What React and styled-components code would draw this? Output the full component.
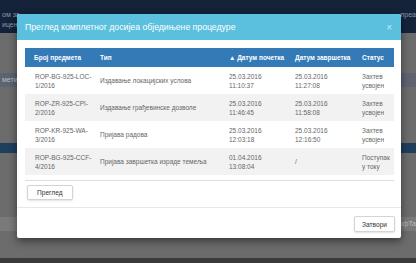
import styled, { createGlobalStyle } from "styled-components";

const Global = createGlobalStyle`
    html, body {
        margin: 0;
        padding: 0;
        width: 416px;
        height: 263px;
        overflow: hidden;
        font-family: "Liberation Sans", Arial, sans-serif;
    }
`

const columns = [
    { title: "Број предмета", width: 67, pad: 9 },
    { title: "Тип", width: 129, pad: 8 },
    { title: "▲ Датум почетка", width: 66, pad: 8 },
    { title: "Датум завршетка", width: 67, pad: 8 },
    { title: "Статус", width: 40, pad: 8 },
]

const rows = [
    { id: ["ROP-BG-925-LOC-", "1/2016"], type: ["Издавање локацијских услова"], start: ["25.03.2016", "11:10:37"], end: ["25.03.2016", "11:27:08"], status: ["Захтев", "усвојен"] },
    { id: ["ROP-ZR-925-CPI-", "2/2016"], type: ["Издавање грађевинске дозволе"], start: ["25.03.2016", "11:46:45"], end: ["25.03.2016", "11:58:08"], status: ["Захтев", "усвојен"] },
    { id: ["ROP-KR-925-WA-", "3/2016"], type: ["Пријава радова"], start: ["25.03.2016", "12:03:18"], end: ["25.03.2016", "12:16:50"], status: ["Захтев", "усвојен"] },
    { id: ["ROP-BG-925-CCF-", "4/2016"], type: ["Пријава завршетка израде темеља"], start: ["01.04.2016", "13:08:04"], end: ["/"], status: ["Поступак", "у току"] },
]

/* the dimmed page behind the dialog */

const Page = styled.div
`
    position: relative;
    width: 416px;
    height: 263px;
    display: flex;
    flex-direction: column;
    background-color: #6c6c6c;
    overflow: hidden;
`

const PageTop = styled.div
`
    height: 33px;
    flex: none;
    display: flex;
    justify-content: space-between;
    background-color: #14233a;
    color: #8d97a6;
    font-size: 7px;
    line-height: 10px;
    padding: 10px 0 0 2px;
    box-sizing: border-box;
`

const PageBand = styled.div
`
    flex: none;
    height: ${p => p.$h}px;
    background-color: ${p => p.$bg || "#6c6c6c"};
    color: #b9bcc0;
    font-size: 7px;
    line-height: ${p => p.$h}px;
    padding-left: 2px;
    display: flex;
    justify-content: space-between;
`

/* dialog */

const Modal = styled.div
`
    position: absolute;
    left: 17px;
    top: 14px;
    width: 384px;
    height: 224px;
    display: flex;
    flex-direction: column;
    background-color: #ffffff;
    border-radius: 2px;
    box-shadow: 0 3px 8px rgba(0, 0, 0, 0.5);
    overflow: hidden;
`

const ModalHeader = styled.div
`
    height: 26px;
    flex: none;
    display: flex;
    align-items: center;
    justify-content: space-between;
    padding: 0 8px;
    background-color: #5bc0de;
    color: #ffffff;
    font-size: 8.7px;
`

const Close = styled.span
`
    color: #c6e9f3;
    font-size: 10px;
    margin-right: 1px;
`

const ModalBody = styled.div
`
    flex: none;
    padding: 8px 7px 7px 8px;
    border-bottom: 1px solid #e8e8e8;
`

const Table = styled.table
`
    width: 369px;
    border-collapse: collapse;
    table-layout: fixed;
    font-size: 6.5px;
    line-height: 9px;
    color: #666666;
`

const Col = styled.col
`
    width: ${p => p.$w}px;
`

const Th = styled.th
`
    height: 19px;
    padding: 0 0 0 ${p => p.$pad}px;
    background-color: #337ab7;
    color: #ffffff;
    font-weight: bold;
    text-align: left;
    white-space: nowrap;
`

const Tr = styled.tr
`
    background-color: ${p => p.$striped ? "#f2f2f2" : "#ffffff"};
`

const Td = styled.td
`
    height: 27px;
    padding: 0 0 0 ${p => p.$pad}px;
    vertical-align: middle;
`

const Line = styled.div
`
    white-space: nowrap;
`

const Divider = styled.div
`
    height: 1px;
    margin-top: 5px;
    background-color: #dddddd;
`

const Button = styled.button
`
    height: ${p => p.$h || 15}px;
    padding: 0 ${p => p.$px || 8}px;
    margin: ${p => p.$m || "0"};
    background-color: #ffffff;
    border: 1px solid #d4d4d4;
    border-radius: 2px;
    box-shadow: 0 1px 2px rgba(0, 0, 0, 0.12);
    color: #333333;
    font-family: "Liberation Sans", Arial, sans-serif;
    font-size: 6.6px;
`

const ModalFooter = styled.div
`
    flex: 1;
    display: flex;
    justify-content: flex-end;
    align-items: flex-start;
    padding: 8px 6px 0 0;
`

function Cell({ pad, items })
{
    return (
        <Td $pad={pad}>
            {items.map((t, i) => <Line key={i}>{t}</Line>)}
        </Td>
    );
}

export default function App()
{
    return (
        <>
            <Global />
            <Page>
                <PageTop>
                    <span>ом за ...<br />ицењ</span>
                    <span>прea</span>
                </PageTop>
                <PageBand $h={40}></PageBand>
                <PageBand $h={14} $bg="#5d6470">мети</PageBand>
                <PageBand $h={56}></PageBand>
                <PageBand $h={10} $bg="#1f3f5e"></PageBand>
                <PageBand $h={64}></PageBand>
                <PageBand $h={14} $bg="#7a7a7a"><span></span><span>uфTa</span></PageBand>
                <PageBand $h={27}></PageBand>
                <PageBand $h={5} $bg="#3a3a3a"></PageBand>

                <Modal>
                    <ModalHeader>
                        <span>Преглед комплетног досијеа обједињене процедуре</span>
                        <Close>×</Close>
                    </ModalHeader>

                    <ModalBody>
                        <Table>
                            <colgroup>
                                {columns.map((c, i) => <Col key={i} $w={c.width} />)}
                            </colgroup>
                            <thead>
                                <tr>
                                    {columns.map((c, i) => <Th key={i} $pad={c.pad}>{c.title}</Th>)}
                                </tr>
                            </thead>
                            <tbody>
                                {rows.map((r, i) => (
                                    <Tr key={i} $striped={i % 2 === 1}>
                                        <Cell pad={10} items={r.id} />
                                        <Cell pad={8} items={r.type} />
                                        <Cell pad={8} items={r.start} />
                                        <Cell pad={8} items={r.end} />
                                        <Cell pad={8} items={r.status} />
                                    </Tr>
                                ))}
                            </tbody>
                        </Table>
                        <Divider></Divider>
                        <Button $m="4px 0 0 2px" $px={9}>Преглед</Button>
                    </ModalBody>

                    <ModalFooter>
                        <Button $h={16} $px={7}>Затвори</Button>
                    </ModalFooter>
                </Modal>
            </Page>
        </>
    );
}
